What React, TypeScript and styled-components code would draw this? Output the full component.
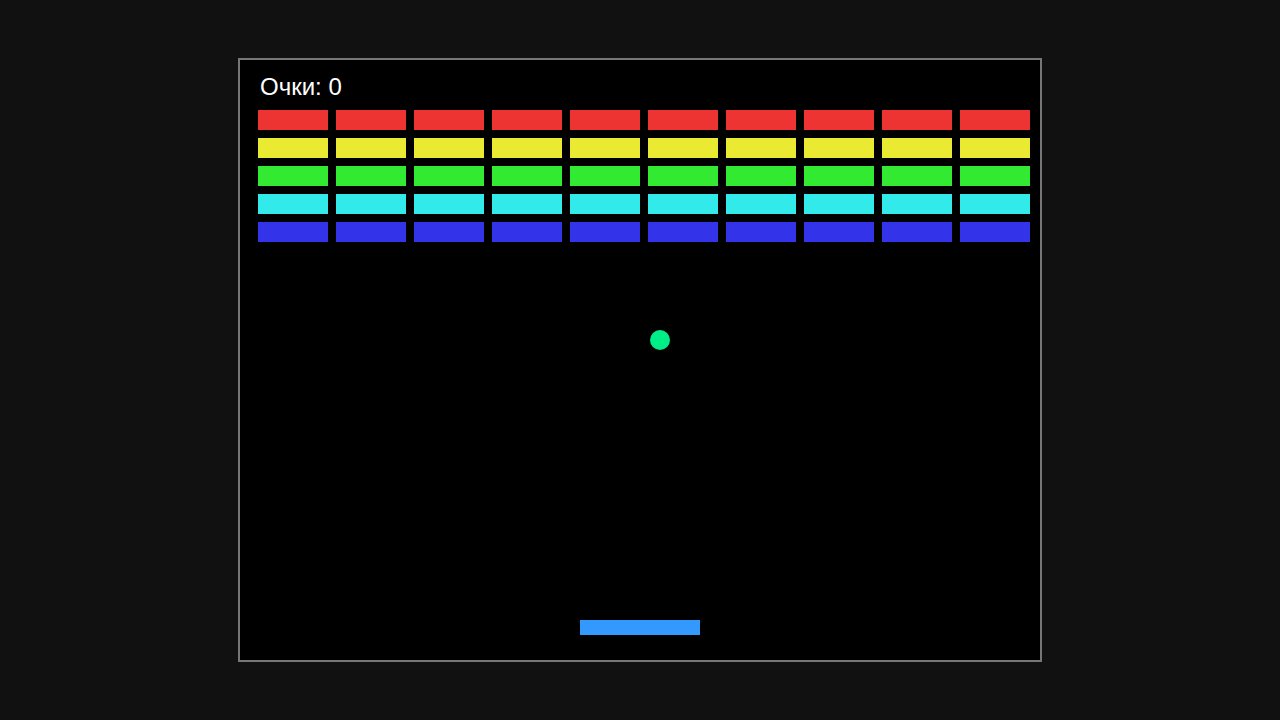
import React from "react";
import styled, { createGlobalStyle } from "styled-components";

const Global = createGlobalStyle`
  html, body { margin: 0; padding: 0; background: #111; }
  body { font-family: "Liberation Sans", Arial, sans-serif; }
`;

const Stage = styled.div`
  width: 100vw;
  height: 100vh;
  display: flex;
  align-items: center;
  justify-content: center;
`;

const Board = styled.div`
  position: relative;
  width: 800px;
  height: 600px;
  background: #000;
  border: 2px solid #777;
  box-sizing: content-box;
  display: flex;
  flex-direction: column;
  padding: 0;
`;

const Score = styled.div`
  margin: 13px 0 0 20px;
  height: 28px;
  font-size: 24px;
  line-height: 28px;
  color: #fff;
`;

const Bricks = styled.div`
  margin: 9px 0 0 18px;
  display: grid;
  grid-template-columns: repeat(10, 70px);
  grid-auto-rows: 20px;
  gap: 8px;
`;

const Brick = styled.div<{ $c: string }>`
  background: ${(p) => p.$c};
`;

const Ball = styled.div`
  position: absolute;
  left: 410px;
  top: 270px;
  width: 20px;
  height: 20px;
  border-radius: 50%;
  background: #00ee88;
`;

const Paddle = styled.div`
  position: absolute;
  left: 340px;
  top: 560px;
  width: 120px;
  height: 15px;
  background: #3399ff;
`;

const rows = ["#ee3333", "#eaea33", "#33ea33", "#33eaea", "#3333ea"];

export default function App() {
  return (
    <>
      <Global />
      <Stage>
        <Board>
          <Score>Очки: 0</Score>
          <Bricks>
            {rows.map((c, r) =>
              Array.from({ length: 10 }).map((_, i) => <Brick key={`${r}-${i}`} $c={c} />)
            )}
          </Bricks>
          <Ball />
          <Paddle />
        </Board>
      </Stage>
    </>
  );
}
